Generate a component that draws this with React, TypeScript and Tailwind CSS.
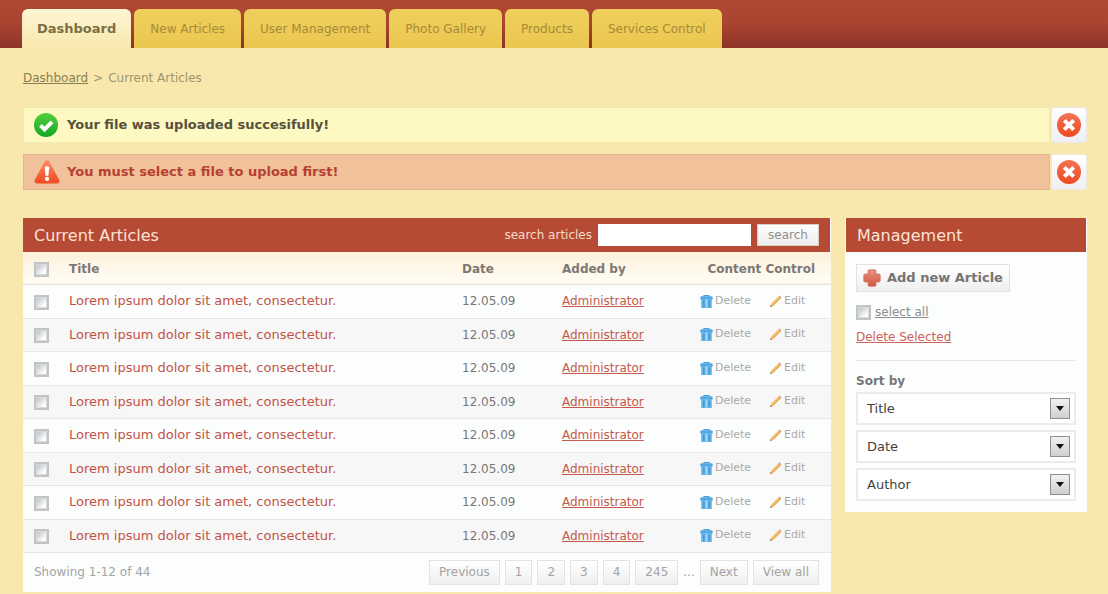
import { useState } from 'react';

const tabs = ['Dashboard', 'New Articles', 'User Management', 'Photo Gallery', 'Products', 'Services Control'];

const articles = Array.from({ length: 8 }, (_, i) => ({
  id: i + 1,
  title: 'Lorem ipsum dolor sit amet, consectetur.',
  date: '12.05.09',
  author: 'Administrator',
}));

function CheckIcon() {
  return (
    <svg viewBox="0 0 24 24" className="size-6" aria-hidden="true">
      <defs>
        <linearGradient id="green" x1="0" y1="0" x2="0" y2="1">
          <stop offset="0" stopColor="#56cf3c" />
          <stop offset="1" stopColor="#12a826" />
        </linearGradient>
      </defs>
      <circle cx="12" cy="12" r="12" fill="url(#green)" />
      <path d="M6.500 12.400l4 4 7.500-7.500" fill="none" stroke="#fff" strokeWidth="4" />
    </svg>
  );
}

function WarningIcon() {
  return (
    <svg viewBox="0 0 26 24" className="h-6 w-[26px]" aria-hidden="true">
      <defs>
        <linearGradient id="warn" x1="0" y1="0" x2="0" y2="1">
          <stop offset="0" stopColor="#ff8a66" />
          <stop offset="1" stopColor="#f04a22" />
        </linearGradient>
      </defs>
      <path d="M10.8 1.4a2.6 2.6 0 0 1 4.4 0l10 18.4c.9 1.8-.2 3.7-2.2 3.7H3c-2 0-3.100-1.900-2.200-3.700z" fill="url(#warn)" />
      <path d="M10.700 7q2.300-1.500 4.600 0l-.9 8.700h-2.800z" fill="#fff" />
      <circle cx="13" cy="18.900" r="2.100" fill="#fff" />
    </svg>
  );
}

function CloseIcon() {
  return (
    <svg viewBox="0 0 24 24" className="size-6" aria-hidden="true">
      <defs>
        <linearGradient id="close" x1="0" y1="0" x2="0" y2="1">
          <stop offset="0" stopColor="#f47355" />
          <stop offset="1" stopColor="#ee4a22" />
        </linearGradient>
      </defs>
      <circle cx="12" cy="12" r="12" fill="url(#close)" />
      <path d="M7.300 7.300l9.400 9.400M16.700 7.300l-9.400 9.400" stroke="#fff" strokeWidth="4" />
    </svg>
  );
}

function TrashIcon() {
  return (
    <svg viewBox="0 0 13 13" className="size-[13px]" aria-hidden="true">
      <path d="M4 2V.600h5V2" fill="none" stroke="#4ba0da" strokeWidth="1.200" />
      <rect x="0.300" y="1.300" width="12.400" height="3.700" rx="1.200" fill="#55a9e2" />
      <path d="M1.200 4h10.600v9H1.200z" fill="#62b6ea" />
      <path d="M3.800 5.500v6.500M9.200 5.500v6.500" stroke="#3f93cf" strokeWidth="1.200" />
      <path d="M6.500 4.500v8" stroke="#a8dcfa" strokeWidth="1.800" />
    </svg>
  );
}

function PencilIcon() {
  return (
    <svg viewBox="0 0 13 13" className="size-[13px]" aria-hidden="true">
      <path d="M1 12l1-3.300L9.300 1.400l2.300 2.300L4.300 11z" fill="#f3c06c" />
      <path d="M3.600 10.500L11 3.200" stroke="#dd9a4c" strokeWidth="0.900" />
      <path d="M9.300 1.400l1-.9q1.400.2 2.200 2.200l-.9 1z" fill="#d9a184" />
      <path d="M1 12l.6-2.100 1.500 1.500z" fill="#8c7460" />
    </svg>
  );
}

function PlusIcon() {
  return (
    <svg viewBox="0 0 18 18" className="size-[18px]" aria-hidden="true">
      <defs>
        <linearGradient id="plus" x1="0" y1="0" x2="0" y2="1">
          <stop offset="0" stopColor="#e9907c" />
          <stop offset="1" stopColor="#cf5a45" />
        </linearGradient>
      </defs>
      <path
        d="M5 2Q5 .8 6.200 .8h5.600Q13 .8 13 2v3h3q1.200 0 1.200 1.200v5.600Q17.200 13 16 13h-3v3q0 1.200-1.200 1.200H6.200Q5 17.200 5 16v-3H2Q.8 13 .8 11.800V6.200Q.8 5 2 5h3z"
        fill="url(#plus)"
        stroke="#cf7363"
        strokeWidth="0.800"
      />
    </svg>
  );
}

function Checkbox({ label, id, checked, onChange }: { label?: string; id?: string; checked: boolean; onChange: () => void }) {
  return (
    <input
      type="checkbox"
      id={id}
      aria-label={label}
      checked={checked}
      onChange={onChange}
      className="block size-[15px] shrink-0 appearance-none border-2 border-[#c2c4c4] bg-linear-to-br from-[#b3bac1] to-white to-75% shadow-[inset_0_0_0_1px_#d8dadb] checked:from-[#6b7177] checked:to-[#8b9197]"
    />
  );
}

function Alert({ kind, text }: { kind: 'success' | 'error'; text: string }) {
  const [open, setOpen] = useState(true);
  if (!open) return null;
  const tone =
    kind === 'success'
      ? 'border-[#efe9ac] bg-[#fef9c2] text-[#57503c]'
      : 'border-[#edb48d] bg-[#f0c19b] text-[#b83f31]';
  return (
    <div role="alert" className="flex h-9 gap-px">
      <div className={`flex flex-1 items-center border pl-[10px] text-[13px] font-bold ${tone}`}>
        <span className="flex w-[33px] shrink-0">{kind === 'success' ? <CheckIcon /> : <WarningIcon />}</span>
        {text}
      </div>
      <button
        type="button"
        aria-label="Dismiss"
        onClick={() => setOpen(false)}
        className="flex w-9 items-center justify-center rounded-[3px] border border-[#ece9e2] bg-linear-to-b from-white to-[#efeff3]"
      >
        <CloseIcon />
      </button>
    </div>
  );
}

function PageButton({ children }: { children: string }) {
  return (
    <button
      type="button"
      className="h-[25px] border border-[#e2e3e3] bg-linear-to-b from-white to-[#eeefef] px-[9px] text-[12px] text-[#a3a3a3]"
    >
      {children}
    </button>
  );
}

function SortSelect({ name }: { name: string }) {
  return (
    <div className="relative">
      <select
        aria-label={`Sort by ${name}`}
        className="block h-[33px] w-full appearance-none border-2 border-[#ebebea] bg-white pl-[9px] text-[13px] text-[#3f3f3f]"
      >
        <option>{name}</option>
      </select>
      <span className="pointer-events-none absolute top-[6px] right-[6px] flex h-[21px] w-5 items-center justify-center border border-[#8f8f8f] bg-linear-to-b from-[#f1f1f1] to-[#cfcfcf]">
        <svg viewBox="0 0 8 5" className="h-[5px] w-2" aria-hidden="true">
          <path d="M0 0h8L4 5z" fill="#111" />
        </svg>
      </span>
    </div>
  );
}

export default function App() {
  const [selected, setSelected] = useState<number[]>([]);
  const all = selected.length === articles.length;
  const toggleAll = () => setSelected(all ? [] : articles.map((a) => a.id));
  const toggle = (id: number) =>
    setSelected((s) => (s.includes(id) ? s.filter((x) => x !== id) : [...s, id]));

  return (
    <div className="min-h-screen bg-[#f8e8ae] font-['DejaVu_Sans',Verdana,sans-serif] text-[12px] text-[#777]">
      <header className="flex h-12 items-end bg-linear-to-b from-[#b04832] via-[#aa4430] to-[#8c3327] pl-[22px]">
        <nav className="flex h-[39px] gap-[3px]">
          {tabs.map((tab, i) => (
            <a
              key={tab}
              href="#"
              className={`flex items-center rounded-t-[6px] pt-px ${
                i === 0
                  ? 'bg-linear-to-b from-[#fdf5d4] to-[#f8e8ae] px-[15px] text-[13px] font-bold text-[#7c6e45]'
                  : 'bg-linear-to-b from-[#efcf5c] to-[#eac750] px-4 text-[12px] text-[#a8893a]'
              }`}
            >
              {tab}
            </a>
          ))}
        </nav>
      </header>

      <main className="pr-[21px] pl-[23px]">
        <nav aria-label="Breadcrumb" className="flex h-[59px] items-center gap-[5px] text-[#a0946a]">
          <a href="#" className="text-[#8a7d50] underline">Dashboard</a>
          <span>&gt;</span>
          <span>Current Articles</span>
        </nav>

        <div className="flex flex-col gap-[11px]">
          <Alert kind="success" text="Your file was uploaded succesifully!" />
          <Alert kind="error" text="You must select a file to upload first!" />
        </div>

        <div className="mt-7 flex items-start gap-[14px]">
          <section className="flex-1 bg-[#fcfefd]">
            <div className="mr-px flex h-[34px] items-center bg-[#b64a34] pr-[11px] pl-[11px]">
              <h2 className="flex-1 pt-px text-[16px] text-[#fbe3d6]">Current Articles</h2>
              <label htmlFor="search" className="mr-[6px] text-[12px] text-[#f7d9c9]">search articles</label>
              <input id="search" type="text" className="h-[22px] w-[153px] bg-white px-1 text-[12px] outline-none" />
              <button
                type="button"
                className="ml-[6px] h-[22px] w-[62px] border border-[#dccfc2] bg-linear-to-b from-white to-[#ececec] text-[12px] text-[#8f8f8f]"
              >
                search
              </button>
            </div>

            <table className="w-full table-fixed border-collapse text-left">
              <colgroup>
                <col className="w-[46px]" />
                <col />
                <col className="w-[100px]" />
                <col className="w-[138px]" />
                <col className="w-[131px]" />
              </colgroup>
              <thead>
                <tr className="h-8 border-b border-[#e6e7e6] bg-linear-to-b from-[#fdf0db] to-[#fffdf6] text-[12px] text-[#7d7773]">
                  <th className="pt-1 pl-[11px]">
                    <Checkbox label="Select all rows" checked={all} onChange={toggleAll} />
                  </th>
                  <th className="pt-0.5">Title</th>
                  <th className="pt-0.5">Date</th>
                  <th className="pt-0.5">Added by</th>
                  <th className="pt-0.5 pr-4 text-right whitespace-nowrap">Content Control</th>
                </tr>
              </thead>
              <tbody>
                {articles.map((a) => (
                  <tr key={a.id} className="border-b border-[#e6e8e7] odd:h-[34px] even:h-[33px] even:bg-[#f7f7f7]">
                    <td className="pt-0.5 pl-[11px]">
                      <Checkbox label={`Select article ${a.id}`} checked={selected.includes(a.id)} onChange={() => toggle(a.id)} />
                    </td>
                    <td>
                      <a href="#" className="text-[13px] text-[#c25348]">{a.title}</a>
                    </td>
                    <td>{a.date}</td>
                    <td>
                      <a href="#" className="text-[#c45a4c] underline">{a.author}</a>
                    </td>
                    <td>
                      <div className="flex items-center text-[11px] text-[#a9a9a9]">
                        <a href="#" className="flex w-[69px] items-center gap-[2px]">
                          <TrashIcon />
                          Delete
                        </a>
                        <a href="#" className="flex items-center gap-[2px]">
                          <PencilIcon />
                          Edit
                        </a>
                      </div>
                    </td>
                  </tr>
                ))}
              </tbody>
            </table>

            <div className="flex h-[39px] items-center justify-between pr-3 pl-[11px]">
              <p className="text-[#a3a3a3]">Showing 1-12 of 44</p>
              <nav aria-label="Pagination" className="flex items-center gap-[5px] text-[#a3a3a3]">
                <PageButton>Previous</PageButton>
                <PageButton>1</PageButton>
                <PageButton>2</PageButton>
                <PageButton>3</PageButton>
                <PageButton>4</PageButton>
                <PageButton>245</PageButton>
                <span>...</span>
                <PageButton>Next</PageButton>
                <PageButton>View all</PageButton>
              </nav>
            </div>
          </section>

          <aside className="w-[242px] bg-[#fcfefd] pb-[11px]">
            <h2 className="mx-px flex h-[34px] items-center bg-[#b64a34] pt-px pl-[11px] text-[16px] text-[#fbe3d6]">
              Management
            </h2>
            <div className="px-[11px] pt-3">
              <button
                type="button"
                className="flex h-7 items-center gap-[6px] border border-[#e0e1e1] bg-linear-to-b from-white to-[#efefef] px-[6px] text-[13px] font-bold text-[#757575]"
              >
                <PlusIcon />
                Add new Article
              </button>
              <div className="mt-3 flex items-center gap-1">
                <Checkbox id="select-all" checked={all} onChange={toggleAll} />
                <label htmlFor="select-all" className="leading-4 text-[#8d8d8d] underline">select all</label>
              </div>
              <a href="#" className="mt-[9px] block leading-4 text-[#cc6259] underline">Delete Selected</a>
              <hr className="mt-[15px] border-[#e4e5e5]" />
              <h3 className="mt-3 leading-4 font-bold text-[#767676]">Sort by</h3>
              <div className="mt-[3px] flex flex-col gap-[5px]">
                <SortSelect name="Title" />
                <SortSelect name="Date" />
                <SortSelect name="Author" />
              </div>
            </div>
          </aside>
        </div>
      </main>
    </div>
  );
}
